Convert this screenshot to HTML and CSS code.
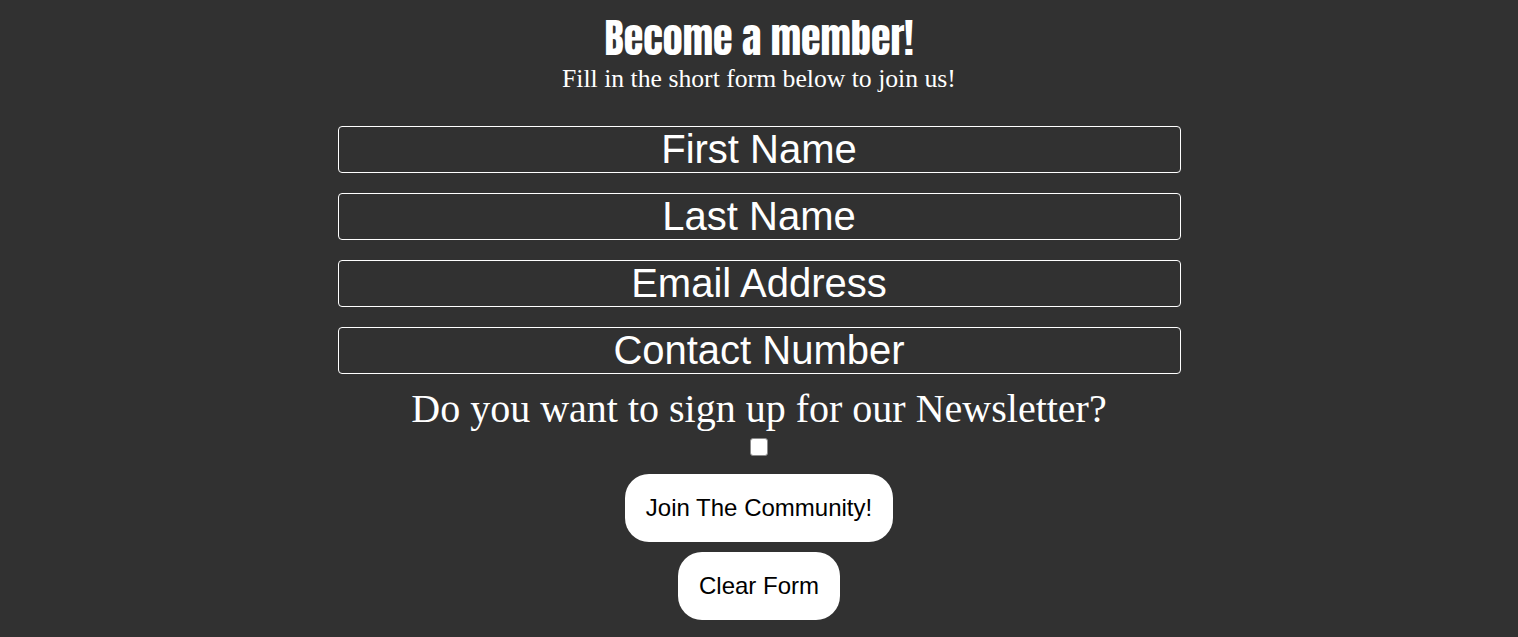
FILE: index.html
```html
<!DOCTYPE html>
<html>
<head>
<meta charset="utf-8">
<link rel="stylesheet" href="styles.css">
</head>
<body>
<main class="page">
  <h1 class="title">Become a member!</h1>
  <p class="subtitle">Fill in the short form below to join us!</p>
  <form class="form">
    <input class="field" type="text" placeholder="First Name">
    <input class="field" type="text" placeholder="Last Name">
    <input class="field" type="email" placeholder="Email Address">
    <input class="field" type="tel" placeholder="Contact Number">
    <label class="question" for="news">Do you want to sign up for our Newsletter?</label>
    <input class="check" id="news" type="checkbox">
    <button class="btn" type="button">Join The Community!</button>
    <button class="btn" type="reset">Clear Form</button>
  </form>
</main>
</body>
</html>
```

FILE: styles.css
```css
html, body {
  margin: 0;
  padding: 0;
  background: #313131;
}
body {
  color: #fff;
  font-family: "Liberation Serif", "Times New Roman", serif;
}
.page {
  display: flex;
  flex-direction: column;
  align-items: center;
  padding-top: 12px;
}
.title {
  margin: 0;
  font-family: Anton, "Liberation Sans Narrow", "Liberation Sans", sans-serif;
  font-weight: normal;
  font-size: 40px;
  line-height: 52px;
}
.subtitle {
  margin: 0;
  font-size: 25.7px;
  line-height: 30px;
}
.form {
  display: flex;
  flex-direction: column;
  align-items: center;
  margin-top: 32px;
  width: 843px;
}
.field {
  box-sizing: border-box;
  width: 843px;
  height: 47px;
  margin: 0 0 20px 0;
  background: transparent;
  border: 1px solid #fff;
  border-radius: 4px;
  color: #fff;
  font-family: "Liberation Sans", Arial, sans-serif;
  font-size: 40px;
  text-align: center;
  padding: 0;
}
.field::placeholder {
  color: #fff;
  opacity: 1;
}
.field:nth-of-type(4) { margin-bottom: 12px; }
.question {
  font-size: 40px;
  line-height: 46px;
}
.check {
  appearance: none;
  -webkit-appearance: none;
  box-sizing: border-box;
  width: 18px;
  height: 18px;
  margin: 6px 0 18px 0;
  background: #fff;
  border: 1px solid #8a8a8a;
  border-radius: 3px;
}
.btn {
  background: #fff;
  color: #000;
  border: none;
  border-radius: 24px;
  font-family: "Liberation Sans", Arial, sans-serif;
  font-size: 24px;
  height: 68px;
  padding: 0 21px;
  margin-bottom: 10px;
}
```
